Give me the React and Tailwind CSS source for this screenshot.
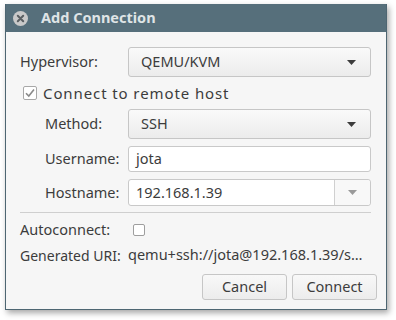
import React from 'react';

const font = { fontFamily: '"Noto Sans", "Open Sans", sans-serif' };

const Arrow = ({ color = '#3c3c3c' }) => (
  <svg width="9" height="5" viewBox="0 0 9 5">
    <path d="M0 0 L9 0 L4.5 5 Z" fill={color} />
  </svg>
);

const Combo = ({ value }) => (
  <div className="flex-1 h-full flex items-center justify-between pl-[12px] pr-[14px] rounded-[3px] border border-[#c6c6c6] bg-gradient-to-b from-[#fafafa] to-[#ececec]">
    <span>{value}</span>
    <Arrow />
  </div>
);

const Entry = ({ value, combo }) => (
  <div className="flex-1 h-full flex items-center rounded-[3px] border border-[#c9c9c9] bg-white">
    <span className="flex-1 pl-[7px]">{value}</span>
    {combo && (
      <div className="w-[36px] h-full border-l border-[#d0d0d0] bg-[#f8f8f8] rounded-r-[3px] flex items-center justify-center">
        <Arrow color="#9a9a9a" />
      </div>
    )}
  </div>
);

const Button = ({ children }) => (
  <button className="w-[85px] h-full rounded-[3px] border border-[#c6c6c6] bg-gradient-to-b from-[#f8f8f8] to-[#ececec] text-[#3c3c3c]">
    {children}
  </button>
);

export default function App() {
  return (
    <div className="w-[396px] h-[320px] bg-white pt-[4px] pl-[5px]" style={font}>
      <div className="w-[382px] h-[306px] flex flex-col border border-t-0 border-[#4e6672] bg-[#f6f6f6] shadow-[2px_3px_6px_rgba(0,0,0,0.35)] text-[14.5px] text-[#3c3c3c]">
        {/* title bar */}
        <div className="h-[28px] bg-[#566f7b] flex items-center pl-[7px] gap-[13px]">
          <svg width="15" height="15" viewBox="0 0 15 15">
            <circle cx="7.5" cy="7.5" r="7.5" fill="#c9c9c9" />
            <path d="M4.8 4.8 L10.2 10.2 M10.2 4.8 L4.8 10.2" stroke="#5a5f62" strokeWidth="2" strokeLinecap="round" />
          </svg>
          <span className="font-bold text-[14.5px] text-[#dfe4e6]">Add Connection</span>
        </div>

        <div className="flex flex-col pt-[15px] pl-[14px] pr-[15px]">
          <div className="h-[30px] flex items-center">
            <span className="w-[108px] shrink-0">Hypervisor:</span>
            <Combo value="QEMU/KVM" />
          </div>

          <div className="h-[20px] mt-[6px] flex items-center pl-[3px] gap-[6px]">
            <svg width="14" height="14" viewBox="0 0 14 14">
              <rect x="0.5" y="0.5" width="13" height="13" rx="1.5" fill="#fff" stroke="#a8a8a8" />
              <path d="M3 7.2 L5.8 10 L11 3.6" stroke="#8a8a8a" strokeWidth="1.6" fill="none" />
            </svg>
            <span className="text-[15px] tracking-[0.9px]">Connect to remote host</span>
          </div>

          <div className="h-[30px] mt-[6px] flex items-center">
            <span className="w-[108px] shrink-0 pl-[25px]">Method:</span>
            <Combo value="SSH" />
          </div>

          <div className="h-[26px] mt-[7px] flex items-center">
            <span className="w-[108px] shrink-0 pl-[25px]">Username:</span>
            <Entry value="jota" />
          </div>

          <div className="h-[27px] mt-[7px] flex items-center">
            <span className="w-[108px] shrink-0 pl-[25px]">Hostname:</span>
            <Entry value="192.168.1.39" combo />
          </div>

          <div className="h-px mt-[6px] bg-[#cfcfcf]" />

          <div className="h-[20px] mt-[7px] flex items-center">
            <span className="w-[113px] shrink-0">Autoconnect:</span>
            <div className="w-[12px] h-[12px] rounded-[2px] border border-[#9e9e9e] bg-white" />
          </div>

          <div className="h-[20px] mt-[5px] flex items-center">
            <span className="w-[108px] shrink-0 text-[14px]">Generated URI:</span>
            <span className="whitespace-nowrap">qemu+ssh://jota@192.168.1.39/s…</span>
          </div>

          <div className="h-[26px] mt-[9px] flex justify-end gap-[5px] mr-[-6px]">
            <Button>Cancel</Button>
            <Button>Connect</Button>
          </div>
        </div>
      </div>
    </div>
  );
}
